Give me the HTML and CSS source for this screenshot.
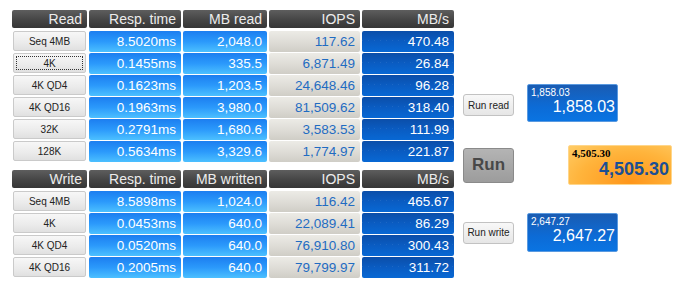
FILE: index.html
```html
<!DOCTYPE html>
<html lang="en">
<head>
    <meta charset="UTF-8">
    <title>SSD Benchmark</title>
    <link rel="stylesheet" href="styles.css">
</head>
<body>
    <div class="bench">
        <div class="results">
            <div class="grid">
                <div class="head">Read</div>
                <div class="head">Resp. time</div>
                <div class="head">MB read</div>
                <div class="head">IOPS</div>
                <div class="head">MB/s</div>

                <div class="label">Seq 4MB</div>
                <div class="cell time">8.5020ms</div>
                <div class="cell time">2,048.0</div>
                <div class="cell iops">117.62</div>
                <div class="cell rate">470.48</div>

                <div class="label focus">4K</div>
                <div class="cell time">0.1455ms</div>
                <div class="cell time">335.5</div>
                <div class="cell iops">6,871.49</div>
                <div class="cell rate">26.84</div>

                <div class="label">4K QD4</div>
                <div class="cell time">0.1623ms</div>
                <div class="cell time">1,203.5</div>
                <div class="cell iops">24,648.46</div>
                <div class="cell rate">96.28</div>

                <div class="label">4K QD16</div>
                <div class="cell time">0.1963ms</div>
                <div class="cell time">3,980.0</div>
                <div class="cell iops">81,509.62</div>
                <div class="cell rate">318.40</div>

                <div class="label">32K</div>
                <div class="cell time">0.2791ms</div>
                <div class="cell time">1,680.6</div>
                <div class="cell iops">3,583.53</div>
                <div class="cell rate">111.99</div>

                <div class="label">128K</div>
                <div class="cell time">0.5634ms</div>
                <div class="cell time">3,329.6</div>
                <div class="cell iops">1,774.97</div>
                <div class="cell rate">221.87</div>
            </div>

            <div class="grid write">
                <div class="head">Write</div>
                <div class="head">Resp. time</div>
                <div class="head">MB written</div>
                <div class="head">IOPS</div>
                <div class="head">MB/s</div>

                <div class="label">Seq 4MB</div>
                <div class="cell time">8.5898ms</div>
                <div class="cell time">1,024.0</div>
                <div class="cell iops">116.42</div>
                <div class="cell rate">465.67</div>

                <div class="label">4K</div>
                <div class="cell time">0.0453ms</div>
                <div class="cell time">640.0</div>
                <div class="cell iops">22,089.41</div>
                <div class="cell rate">86.29</div>

                <div class="label">4K QD4</div>
                <div class="cell time">0.0520ms</div>
                <div class="cell time">640.0</div>
                <div class="cell iops">76,910.80</div>
                <div class="cell rate">300.43</div>

                <div class="label">4K QD16</div>
                <div class="cell time">0.2005ms</div>
                <div class="cell time">640.0</div>
                <div class="cell iops">79,799.97</div>
                <div class="cell rate">311.72</div>
            </div>
        </div>

        <div class="panel">
            <div class="panel-row read-row">
                <button class="run-small">Run read</button>
                <div class="score blue">
                    <span class="score-small">1,858.03</span>
                    <span class="score-big">1,858.03</span>
                </div>
            </div>
            <div class="panel-row total-row">
                <button class="run-big">Run</button>
                <div class="score orange">
                    <span class="score-small">4,505.30</span>
                    <span class="score-big">4,505.30</span>
                </div>
            </div>
            <div class="panel-row write-row">
                <button class="run-small">Run write</button>
                <div class="score blue">
                    <span class="score-small">2,647.27</span>
                    <span class="score-big">2,647.27</span>
                </div>
            </div>
        </div>
    </div>
</body>
</html>
```

FILE: styles.css
```css
body {
    margin: 0;
    background: #fff;
    font-family: "Liberation Sans", Arial, sans-serif;
}
.bench {
    display: flex;
    padding: 10px 0 0 12px;
}
.grid {
    display: grid;
    grid-template-columns: 75px 92px 84px 91px 92px;
    grid-template-rows: 20px;
    grid-auto-rows: 21px;
    column-gap: 2px;
    row-gap: 1px;
}
.grid.write {
    margin-top: 8px;
}
.head {
    height: 18px;
    line-height: 19px;
    padding-right: 5px;
    text-align: right;
    font-size: 14px;
    color: #ececec;
    background: linear-gradient(#5e5e5e, #454545 55%, #363636);
    border-radius: 2px;
}
.label {
    position: relative;
    margin: 0 1px 1px;
    height: 20px;
    line-height: 19px;
    text-align: center;
    font-size: 10px;
    color: #222;
    background: linear-gradient(#f7f7f7, #ebebeb 60%, #e0e0e0);
    border: 1px solid #cacaca;
    border-radius: 2px;
    box-sizing: border-box;
}
.label.focus::after {
    content: "";
    position: absolute;
    inset: 2px;
    border: 1px dotted #333;
}
.cell {
    line-height: 22px;
    padding-right: 5px;
    text-align: right;
    font-size: 13.5px;
    border-radius: 2px;
}
.time {
    color: #fff;
    background: linear-gradient(#1c7ef0, #2b99fb 50%, #4cc0ff);
}
.iops {
    color: #1f6cc2;
    background: linear-gradient(#ecebe6, #dcdad4 60%, #cfcdc6);
}
.rate {
    color: #fff;
    background:
        repeating-linear-gradient(90deg, rgba(255,255,255,0.08) 0 1px, transparent 1px 6px) 0 9px / 100% 1px no-repeat,
        linear-gradient(#0b4ea9, #0a5cc2 50%, #0868d4);
}
.panel {
    margin-left: 9px;
    padding-top: 74px;
}
.panel-row {
    display: flex;
    align-items: center;
}
.total-row {
    margin-top: 23px;
}
.write-row {
    margin-top: 28px;
}
.run-small {
    width: 51px;
    height: 22px;
    padding: 0;
    font-family: "Liberation Sans", Arial, sans-serif;
    font-size: 10px;
    color: #222;
    background: linear-gradient(#f8f8f8, #e6e6e6);
    border: 1px solid #c2c2c2;
    border-radius: 3px;
}
.read-row .run-small {
    margin-top: 4px;
}
.run-big {
    width: 51px;
    height: 35px;
    padding: 0;
    font-family: "Liberation Sans", Arial, sans-serif;
    font-size: 17px;
    font-weight: bold;
    color: #484848;
    background: linear-gradient(#b4b4b4, #9c9c9c);
    border: 1px solid #8a8a8a;
    border-radius: 3px;
}
.score {
    display: flex;
    flex-direction: column;
    box-sizing: border-box;
    border-radius: 2px;
    padding: 2px 2px 0 3px;
}
.score.blue {
    margin-left: 13px;
    width: 91px;
    height: 38px;
    color: #fff;
    background: linear-gradient(#1a5cb2, #0c6bd6 60%, #0a74e2);
    border: 1px solid #5a9ae0;
}
.write-row .score.blue {
    height: 39px;
}
.score.orange {
    margin-left: 54px;
    width: 104px;
    height: 40px;
    color: #1b4f94;
    background: radial-gradient(ellipse at 60% 95%, #ff961a, #ffb43c 60%, #ffcc66);
    border: 1px solid #ffd68a;
}
.score-small {
    font-size: 10px;
    line-height: 11px;
}
.score-big {
    text-align: right;
    font-size: 16px;
    line-height: 18px;
}
.orange .score-small {
    font-family: "Liberation Serif", "Times New Roman", serif;
    font-weight: bold;
    font-size: 11px;
    color: #000;
}
.orange .score-big {
    font-weight: bold;
    font-size: 18px;
    line-height: 20px;
}
```
